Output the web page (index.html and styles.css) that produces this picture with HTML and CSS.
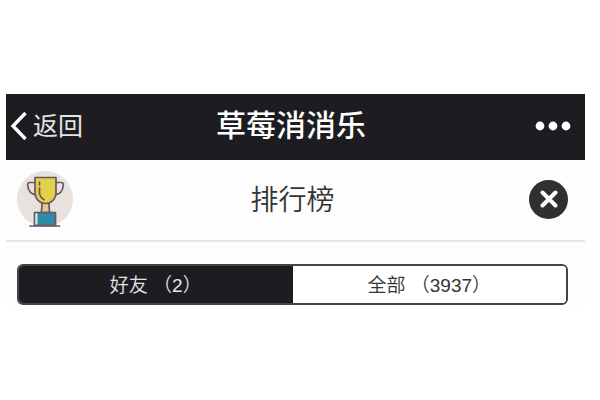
FILE: index.html
```html
<!DOCTYPE html>
<html lang="zh-CN">
<head>
  <meta charset="UTF-8" />
  <meta name="viewport" content="width=device-width, initial-scale=1.0"/>
  <title>草莓消消乐</title>

  <link rel="stylesheet" href="styles.css">
</head>
<body>
  <div class="app">
    <header class="navbar">
      <button type="button" class="backBtn">
        <svg class="backIcon" width="18" height="30" viewBox="0 0 18 30" aria-hidden="true">
          <path d="M15.500 2 L3 15 L15.500 28" fill="none" stroke="#fff" stroke-width="3.400"/>
        </svg>
        <span>返回</span>
      </button>
      <h1>草莓消消乐</h1>
      <button type="button" class="moreBtn" aria-label="更多">
        <svg width="38" height="10" viewBox="0 0 38 10" aria-hidden="true">
          <g fill="#fff">
            <circle cx="6" cy="5" r="4.400"/>
            <circle cx="19" cy="5" r="4.400"/>
            <circle cx="32" cy="5" r="4.400"/>
          </g>
        </svg>
      </button>
    </header>

    <div class="rankBar">
      <svg class="trophy" width="56" height="56" viewBox="0 0 56 56" aria-hidden="true">
        <circle cx="28" cy="28" r="28" fill="#e8e2de"/>
        <g stroke="#6b5560" stroke-width="1.700" stroke-linejoin="round" stroke-linecap="round">
          <path d="M18.500 11.500 H12.500 Q10.500 11.500 10.700 14 C11 20 14 23.500 20 24" fill="none"/>
          <path d="M39 11.500 H44.500 Q46.500 11.500 46.300 14 C46 20 43 23.500 37 24" fill="none"/>
          <path d="M25 31 C25 36 25 39 24 41.500 H33 C32 39 32 36 32 31 Z" fill="#e6c39a"/>
          <path d="M18 6.500 H39 V22 C39 28 34 32.500 28.500 32.500 C23 32.500 18 28 18 22 Z" fill="#e0d04a"/>
          <path d="M22.500 11 V14 M22.500 17 V22 Q23 26.500 27 28.500" fill="none"/>
          <rect x="17.500" y="41.500" width="21" height="13" fill="#2a8ca5"/>
          <path d="M13 55 H42.500"/>
        </g>
        <path d="M18.300 42.300 H20.500 V53.500 H18.300 Z" fill="#d5ecef"/>
      </svg>
      <h2>排行榜</h2>
      <button type="button" class="closeBtn" aria-label="关闭">
        <svg width="18" height="18" viewBox="0 0 18 18" aria-hidden="true">
          <path d="M2.500 2.500 L15.500 15.500 M15.500 2.500 L2.500 15.500" fill="none" stroke="#fff" stroke-width="4" stroke-linecap="round"/>
        </svg>
      </button>
    </div>

    <div class="tabs" role="tablist">
      <button type="button" class="tab active" role="tab" aria-selected="true">好友 （2）</button>
      <button type="button" class="tab" role="tab" aria-selected="false">全部 （3937）</button>
    </div>
  </div>
</body>
</html>
```
FILE: styles.css
```css
:root {
  --bar-color: #1d1c21;
  --text-dark: #333;
  --line-color: #e6e6e6;
  --panel-bg: #fdfdfd;
}

* {
  box-sizing: border-box;
}

body {
  margin: 0;
  background: #fff;
  color: var(--text-dark);
  font-family: "Liberation Sans", Arial, "Noto Sans CJK SC", sans-serif;
}

button {
  margin: 0;
  padding: 0;
  border: 0;
  background: none;
  color: inherit;
  font: inherit;
  cursor: pointer;
}

svg {
  display: block;
}

h1,
h2 {
  margin: 0;
}

.app {
  margin: 94px 15px 0 6px;
  background: var(--panel-bg);
}

/* Both bars keep their title between two equal side columns */
.navbar,
.rankBar {
  display: grid;
  grid-template-columns: 1fr auto 1fr;
  align-items: center;
}

.navbar {
  height: 66px;
  padding: 0 13px 3px 4px;
  background: var(--bar-color);
  color: #fff;
}

.navbar h1 {
  font-size: 30px;
  font-weight: 500;
  line-height: 40px;
}

.backBtn {
  display: flex;
  align-items: center;
  gap: 5px;
  justify-self: start;
  color: #e4e4e6;
  font-size: 25px;
  line-height: 40px;
}

.moreBtn {
  justify-self: end;
}

.rankBar {
  height: 82px;
  padding: 0 17px 2px 11px;
  border-bottom: 2px solid var(--line-color);
}

.rankBar h2 {
  padding-top: 4px;
  font-size: 28px;
  font-weight: 350;
  line-height: 40px;
}

.closeBtn {
  display: flex;
  align-items: center;
  justify-content: center;
  justify-self: end;
  width: 39px;
  height: 39px;
  border-radius: 50%;
  background: #303033;
}

/* Segmented switch */
.tabs {
  display: flex;
  margin: 22px 17px 0 11px;
  border: 2px solid #444;
  border-radius: 6px;
  overflow: hidden;
}

.tab {
  flex: 1;
  height: 37px;
  padding-top: 3px;
  background: #fff;
  font-size: 19px;
  font-weight: 350;
  line-height: 34px;
  white-space: nowrap;
}

.tab.active {
  background: var(--bar-color);
  color: #e4e4e6;
}
```
